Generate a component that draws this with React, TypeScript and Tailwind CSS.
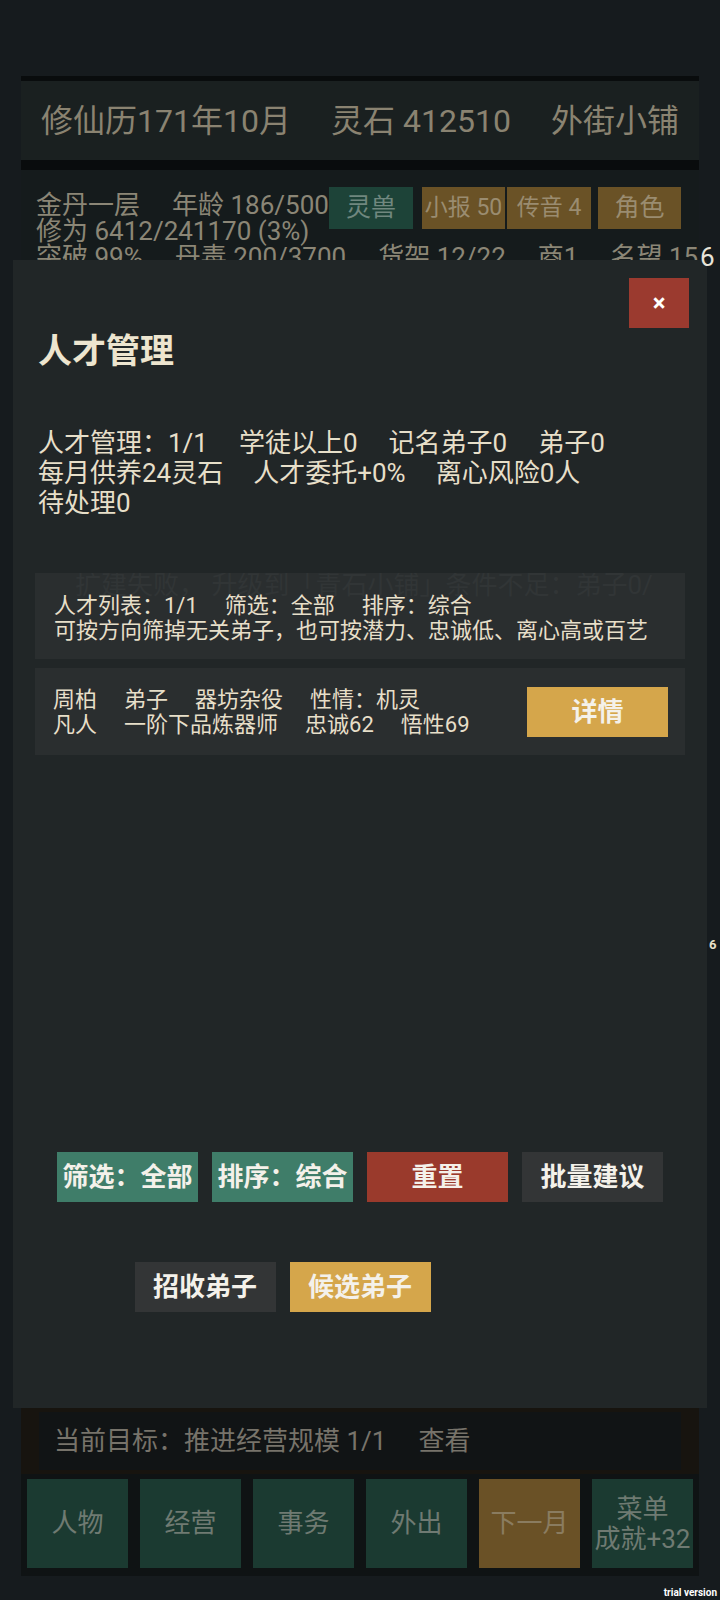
import React from "react";

// 人才管理 modal over the shop screen

const navItems = [
  { label: "人物", gold: false },
  { label: "经营", gold: false },
  { label: "事务", gold: false },
  { label: "外出", gold: false },
  { label: "下一月", gold: true },
];

function ModalButton({
  label,
  tone,
  hidden,
}: {
  label: string;
  tone: "green" | "red" | "dark" | "gold";
  hidden?: boolean;
}) {
  const toneClass = {
    green: "bg-[#3f7d69]",
    red: "bg-[#9a3a2c]",
    dark: "bg-[#333536]",
    gold: "bg-[#d5a64b]",
  }[tone];
  return (
    <div
      className={`flex h-[50px] w-[141px] items-center justify-center text-[26px] font-bold text-[#f4f1ea] ${toneClass} ${
        hidden ? "invisible" : ""
      }`}
    >
      {label}
    </div>
  );
}

export default function App() {
  return (
    <div className="relative h-[1600px] w-[720px] overflow-hidden bg-[#161b1e] font-['Roboto','Noto_Sans_CJK_SC',sans-serif]">
      {/* Underlying page */}
      <div className="flex h-full flex-col px-[21px] pt-[76px] pb-[24px]">
        {/* Top bar */}
        <div className="border-t-[5px] border-b-[10px] border-[#090c0d] bg-[#1a2020]">
          <div className="flex h-[79px] items-center justify-between px-[20px] text-[32px] text-[#8a8371]">
            <span>修仙历171年10月</span>
            <span>灵石 412510</span>
            <span>外街小铺</span>
          </div>
        </div>

        {/* Stats */}
        <div className="flex-1 bg-[#151b1c] pl-[15px] pr-[18px] pt-[17px] text-[26px] leading-[26px] text-[#8b8676]">
          <div className="flex items-start">
            <div className="mt-[5px] shrink-0 whitespace-nowrap">
              <div className="flex gap-x-[32px]">
                <span>金丹一层</span>
                <span>年龄 186/500</span>
              </div>
              <div>修为 6412/241170 (3%)</div>
            </div>
            <div className="ml-auto flex shrink-0 whitespace-nowrap">
              <div className="flex h-[42px] w-[84px] items-center justify-center bg-[#1d4338] text-[25px] text-[#70877f]">
                灵兽
              </div>
              <div className="ml-[9px] flex h-[42px] w-[83px] items-center justify-center bg-[#6a5226] text-[23px] text-[#9a8c70]">
                小报 50
              </div>
              <div className="ml-[2px] flex h-[42px] w-[84px] items-center justify-center bg-[#6a5226] text-[23px] text-[#9a8c70]">
                传音 4
              </div>
              <div className="ml-[7px] flex h-[42px] w-[83px] items-center justify-center bg-[#6a5226] text-[25px] text-[#9a8c70]">
                角色
              </div>
            </div>
          </div>
          <div className="flex gap-x-[32px] whitespace-nowrap">
            <span>突破 99%</span>
            <span>丹毒 200/3700</span>
            <span>货架 12/22</span>
            <span>商1</span>
            <span>名望 15</span>
          </div>
        </div>

        {/* Current goal */}
        <div className="h-[66px] bg-[#17140f] px-[18px] py-[4px]">
          <div className="flex h-full items-center gap-x-[32px] bg-[#111415] px-[15px] text-[26px] text-[#77736a]">
            <span>当前目标：推进经营规模 1/1</span>
            <span>查看</span>
          </div>
        </div>

        {/* Bottom nav */}
        <div className="flex gap-[12px] bg-[#0f1314] px-[6px] pt-[5px] pb-[8px]">
          {navItems.map((item) => (
            <div
              key={item.label}
              className={`flex h-[89px] w-[101px] items-center justify-center text-[26px] ${
                item.gold ? "bg-[#6a5126] text-[#8a7c60]" : "bg-[#1b3a31] text-[#6f7a72]"
              }`}
            >
              {item.label}
            </div>
          ))}
          <div className="flex h-[89px] w-[101px] flex-col items-center justify-center bg-[#1b3a31] text-[26px] leading-[30px] text-[#6f7a72]">
            <span>菜单</span>
            <span>成就+32</span>
          </div>
        </div>
      </div>

      {/* Modal */}
      <div className="absolute left-[13px] top-[260px] flex h-[1148px] w-[694px] flex-col bg-[#212627] text-[#e7dfc9]">
        <div className="absolute right-[18px] top-[18px] flex h-[50px] w-[60px] items-center justify-center bg-[#9b3a2f] text-[24px] font-bold text-white">
          ×
        </div>

        <h2 className="mt-[71px] pl-[25px] text-[34px] font-bold leading-[40px] text-[#ede5cf]">人才管理</h2>

        <div className="mt-[57px] px-[25px] text-[26px] leading-[30px]">
          <div className="flex gap-x-[31px]">
            <span>人才管理：1/1</span>
            <span>学徒以上0</span>
            <span>记名弟子0</span>
            <span>弟子0</span>
          </div>
          <div className="flex gap-x-[30px]">
            <span>每月供养24灵石</span>
            <span>人才委托+0%</span>
            <span>离心风险0人</span>
          </div>
          <div>待处理0</div>
        </div>

        {/* List header */}
        <div className="relative mx-[22px] mt-[55px] overflow-hidden bg-[#2a2e2f] pl-[19px] pt-[20px] pb-[16px] text-[22px] leading-[25px]">
          <div className="absolute left-[40px] top-0 whitespace-nowrap text-[26px] leading-[24px] text-[#313536]">
            扩建失败， 升级到「青石小铺」条件不足：弟子0/
          </div>
          <div className="relative flex gap-x-[27px]">
            <span>人才列表：1/1</span>
            <span>筛选：全部</span>
            <span>排序：综合</span>
          </div>
          <div className="relative">可按方向筛掉无关弟子，也可按潜力、忠诚低、离心高或百艺</div>
        </div>

        {/* Person card */}
        <div className="mx-[22px] mt-[9px] flex items-center bg-[#2a2e2f] pl-[18px] pr-[17px] pt-[19px] pb-[18px] text-[22px] leading-[25px]">
          <div>
            <div className="flex gap-x-[27px]">
              <span>周柏</span>
              <span>弟子</span>
              <span>器坊杂役</span>
              <span>性情：机灵</span>
            </div>
            <div className="flex gap-x-[27px]">
              <span>凡人</span>
              <span>一阶下品炼器师</span>
              <span>忠诚62</span>
              <span>悟性69</span>
            </div>
          </div>
          <div className="ml-auto">
            <ModalButton label="详情" tone="gold" />
          </div>
        </div>

        {/* Actions */}
        <div className="mt-auto mb-[96px] flex flex-col items-center gap-[60px]">
          <div className="flex gap-[14px]">
            <ModalButton label="筛选：全部" tone="green" />
            <ModalButton label="排序：综合" tone="green" />
            <ModalButton label="重置" tone="red" />
            <ModalButton label="批量建议" tone="dark" />
          </div>
          <div className="flex gap-[14px]">
            <ModalButton label="招收弟子" tone="dark" />
            <ModalButton label="候选弟子" tone="gold" />
            <ModalButton label="" tone="dark" hidden />
          </div>
        </div>
      </div>

      {/* stray overflow glyphs at the right edge */}
      <div className="absolute left-[700px] top-[243px] text-[26px] leading-[28px] text-[#e8e4da]">6</div>
      <div className="absolute left-[709px] top-[937px] text-[13px] font-bold leading-[16px] text-[#e8e0c8]">6</div>

      <div className="absolute bottom-[1px] right-[3px] text-[10px] font-bold leading-[12px] text-white">trial version</div>
    </div>
  );
}
